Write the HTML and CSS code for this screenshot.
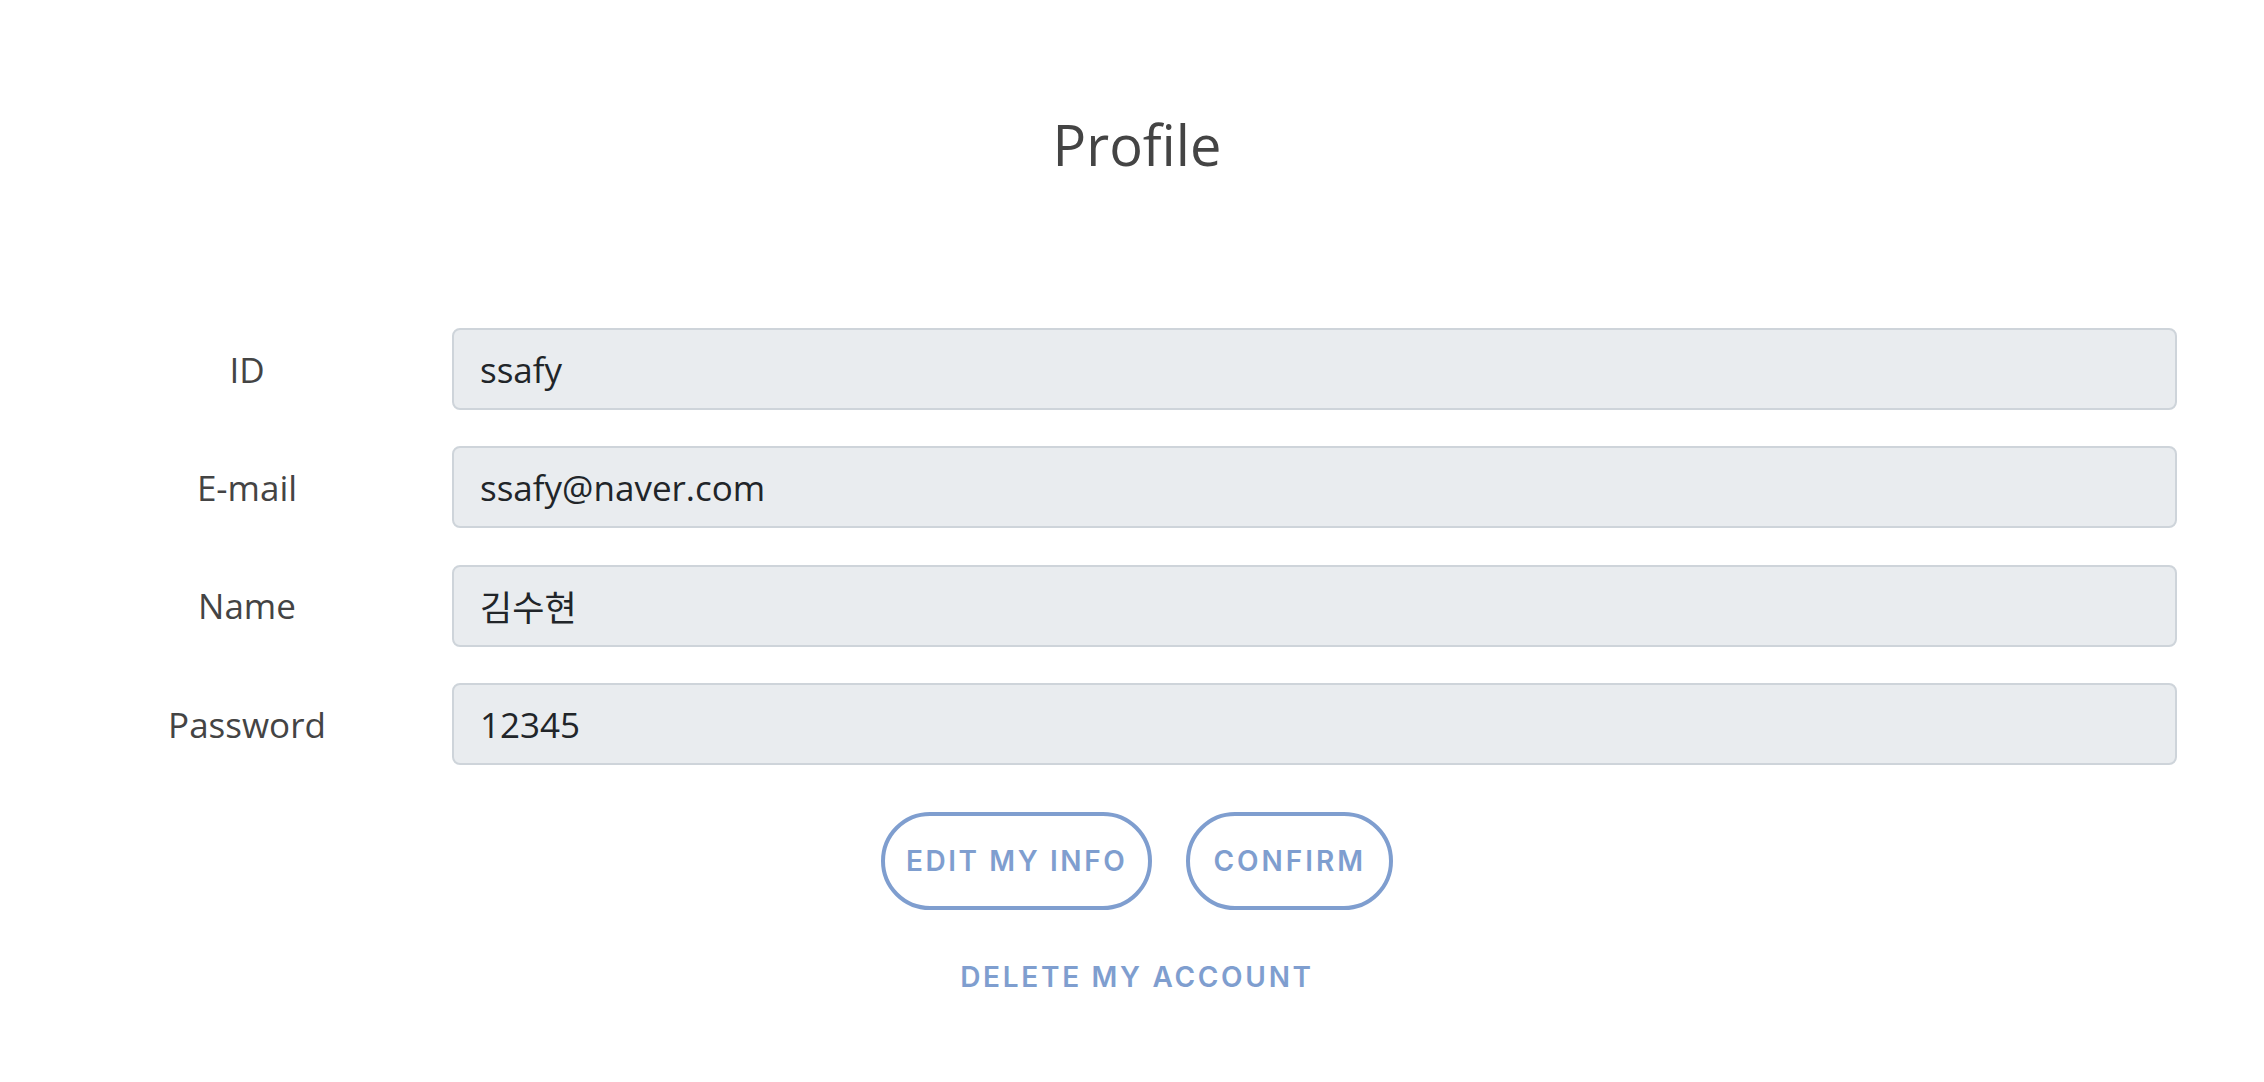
FILE: index.html
```html
<!DOCTYPE html>
<html lang="ko">
<head>
<meta charset="utf-8">
<title>Profile</title>
<link rel="stylesheet" href="styles.css">
</head>
<body>
<div class="page">
  <h1 class="title">Profile</h1>
  <form class="profile-form">
    <div class="row">
      <label class="label" for="uid">ID</label>
      <input class="field" id="uid" type="text" value="ssafy" readonly>
    </div>
    <div class="row">
      <label class="label" for="email">E-mail</label>
      <input class="field" id="email" type="text" value="ssafy@naver.com" readonly>
    </div>
    <div class="row">
      <label class="label" for="name">Name</label>
      <input class="field" id="name" type="text" value="김수현" readonly>
    </div>
    <div class="row">
      <label class="label" for="pw">Password</label>
      <input class="field" id="pw" type="text" value="12345" readonly>
    </div>
  </form>
  <div class="actions">
    <button class="pill pill-edit" type="button">EDIT MY INFO</button>
    <button class="pill pill-confirm" type="button">CONFIRM</button>
  </div>
  <div class="delete-wrap">
    <a class="delete-link" href="#">DELETE MY ACCOUNT</a>
  </div>
</div>
</body>
</html>
```
FILE: styles.css
```css
html, body {
  margin: 0;
  padding: 0;
  background: #ffffff;
}

body {
  font-family: "Open Sans", "Noto Sans", "Noto Sans CJK KR", sans-serif;
}

.page {
  padding-left: 10px;
  padding-top: 111px;
}

.title {
  margin: 0;
  text-align: center;
  font-size: 56px;
  font-weight: 400;
  line-height: 1.2;
  color: #444444;
}

.profile-form {
  margin-top: 150px;
  padding: 0 87px 0 32px;
  display: flex;
  flex-direction: column;
  gap: 36.3px;
}

.row {
  display: grid;
  grid-template-columns: 410px 1fr;
  align-items: center;
  height: 82px;
}

.label {
  text-align: center;
  font-size: 35px;
  color: #444444;
}

.field {
  box-sizing: border-box;
  width: 100%;
  height: 82px;
  margin: 0;
  padding: 0 26px;
  border: 2px solid #ced4da;
  border-radius: 8px;
  background: #e9ecef;
  font-family: "Open Sans", "Noto Sans", "Noto Sans CJK KR", sans-serif;
  font-size: 35px;
  color: #212529;
  outline: none;
}

.actions {
  margin-top: 47px;
  display: flex;
  justify-content: center;
  gap: 34px;
}

.pill {
  box-sizing: border-box;
  height: 98px;
  padding: 0 21px;
  border: 4px solid #7f9ecf;
  border-radius: 49px;
  background: #ffffff;
  color: #7f9ecf;
  font-family: "Inter", "Lato", sans-serif;
  font-size: 28px;
  font-weight: 600;
  letter-spacing: 2.6px;
  cursor: pointer;
}

.pill-confirm {
  padding: 0 23px;
  letter-spacing: 3px;
}

.delete-wrap {
  margin-top: 53px;
  text-align: center;
  line-height: 1;
}

.delete-link {
  font-family: "Inter", "Lato", sans-serif;
  font-size: 28px;
  font-weight: 600;
  letter-spacing: 2.7px;
  color: #7f9ecf;
  text-decoration: none;
}
```
